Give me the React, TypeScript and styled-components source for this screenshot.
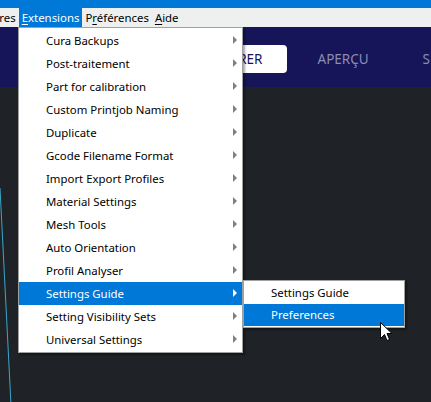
import React from "react";
import styled, { createGlobalStyle } from "styled-components";

const Global = createGlobalStyle`
  html, body { margin: 0; padding: 0; }
  body {
    width: 431px; height: 402px; overflow: hidden;
    font-family: "Noto Sans", "Open Sans", sans-serif;
    background: #1f2327;
  }
  #root { width: 431px; height: 402px; }
`;

const Screen = styled.div`
  position: relative;
  width: 431px;
  height: 402px;
  display: flex;
  flex-direction: column;
  overflow: hidden;
`;

const TitleStrip = styled.div`
  height: 8px;
  background: #0078d7;
  flex: none;
`;

const MenuBar = styled.div`
  height: 19px;
  background: #eef0ef;
  display: flex;
  align-items: stretch;
  flex: none;
  font-size: 11.4px;
  color: #000;
`;

const MenuBarItem = styled.div<{ $active?: boolean; $offset?: number }>`
  display: flex;
  align-items: center;
  padding: 0 3px;
  margin-left: ${(p) => p.$offset ?? 0}px;
  background: ${(p) => (p.$active ? "#0078d7" : "transparent")};
  color: ${(p) => (p.$active ? "#fff" : "#000")};
  white-space: nowrap;
  u { text-decoration-thickness: 1px; text-underline-offset: 2px; }
`;

const Header = styled.div`
  height: 60px;
  background: #16155a;
  flex: none;
  display: flex;
  align-items: center;
  padding-left: 174px;
`;

const StageButton = styled.div`
  flex: none;
  height: 28px;
  padding: 0 24px;
  border-radius: 4px;
  background: #fff;
  color: #16155a;
  font-size: 13.5px;
  display: flex;
  align-items: center;
  margin-top: 4px;
  margin-right: 31px;
  white-space: nowrap;
`;

const StageTab = styled.div`
  flex: none;
  color: #8c8cb0;
  font-size: 13.5px;
  white-space: nowrap;
  margin-top: 4px;
  margin-right: 54px;
`;

const Viewport = styled.div`
  flex: 1;
  background: #1f2327;
  position: relative;
`;

const EdgeLine = styled.svg`
  position: absolute;
  left: 0;
  top: 0;
`;

const Dropdown = styled.div<{ $left: number; $top: number; $width: number }>`
  position: absolute;
  left: ${(p) => p.$left}px;
  top: ${(p) => p.$top}px;
  width: ${(p) => p.$width}px;
  background: #fff;
  border: 1px solid #a0a0a0;
  box-shadow: 2px 2px 2px rgba(0, 0, 0, 0.35);
  padding: 1px 0;
  display: flex;
  flex-direction: column;
  font-size: 11.4px;
`;

const MenuRow = styled.div<{ $active?: boolean; $h: number }>`
  height: ${(p) => p.$h}px;
  display: flex;
  align-items: center;
  padding-left: 27px;
  padding-right: 5px;
  padding-bottom: 1px;
  box-sizing: border-box;
  background: ${(p) => (p.$active ? "#0078d7" : "transparent")};
  color: ${(p) => (p.$active ? "#fff" : "#000")};
  white-space: nowrap;
`;

const RowLabel = styled.span`
  flex: 1;
`;

const Arrow = styled.span<{ $active?: boolean }>`
  width: 0;
  height: 0;
  border-top: 4px solid transparent;
  border-bottom: 4px solid transparent;
  border-left: 4px solid ${(p) => (p.$active ? "#fff" : "#808080")};
`;

const Cursor = styled.svg`
  position: absolute;
  left: 380px;
  top: 322px;
`;

const items = [
  "Cura Backups",
  "Post-traitement",
  "Part for calibration",
  "Custom Printjob Naming",
  "Duplicate",
  "Gcode Filename Format",
  "Import Export Profiles",
  "Material Settings",
  "Mesh Tools",
  "Auto Orientation",
  "Profil Analyser",
  "Settings Guide",
  "Setting Visibility Sets",
  "Universal Settings",
];

export default function App() {
  return (
    <>
      <Global />
      <Screen>
        <TitleStrip />
        <MenuBar>
          <MenuBarItem $offset={-49}>Paramètres</MenuBarItem>
          <MenuBarItem $active>
            <span>
              <u>E</u>xtensions
            </span>
          </MenuBarItem>
          <MenuBarItem>
            <span>
              P<u>r</u>éférences
            </span>
          </MenuBarItem>
          <MenuBarItem>
            <span>
              <u>A</u>ide
            </span>
          </MenuBarItem>
        </MenuBar>
        <Header>
          <StageButton>PRÉPARER</StageButton>
          <StageTab>APERÇU</StageTab>
          <StageTab>SURVEILLER</StageTab>
        </Header>
        <Viewport>
          <EdgeLine width="20" height="320" viewBox="0 0 20 320">
            <line x1="0" y1="101" x2="11" y2="318" stroke="#3ba7c9" strokeWidth="1" />
          </EdgeLine>
        </Viewport>

        <Dropdown $left={18} $top={27} $width={223}>
          {items.map((t) => (
            <MenuRow key={t} $h={23} $active={t === "Settings Guide"}>
              <RowLabel>{t}</RowLabel>
              <Arrow $active={t === "Settings Guide"} />
            </MenuRow>
          ))}
        </Dropdown>

        <Dropdown $left={243} $top={280} $width={160}>
          <MenuRow $h={22}>
            <RowLabel>Settings Guide</RowLabel>
          </MenuRow>
          <MenuRow $h={22} $active>
            <RowLabel>Preferences</RowLabel>
          </MenuRow>
        </Dropdown>

        <Cursor width="13" height="21" viewBox="0 0 13 21">
          <path
            d="M0.5 0.5 L0.5 16.5 L4.5 12.5 L7 18.5 L9.5 17.5 L7 11.5 L12 11.5 Z"
            fill="#fff"
            stroke="#000"
            strokeWidth="1"
            strokeLinejoin="miter"
          />
        </Cursor>
      </Screen>
    </>
  );
}
